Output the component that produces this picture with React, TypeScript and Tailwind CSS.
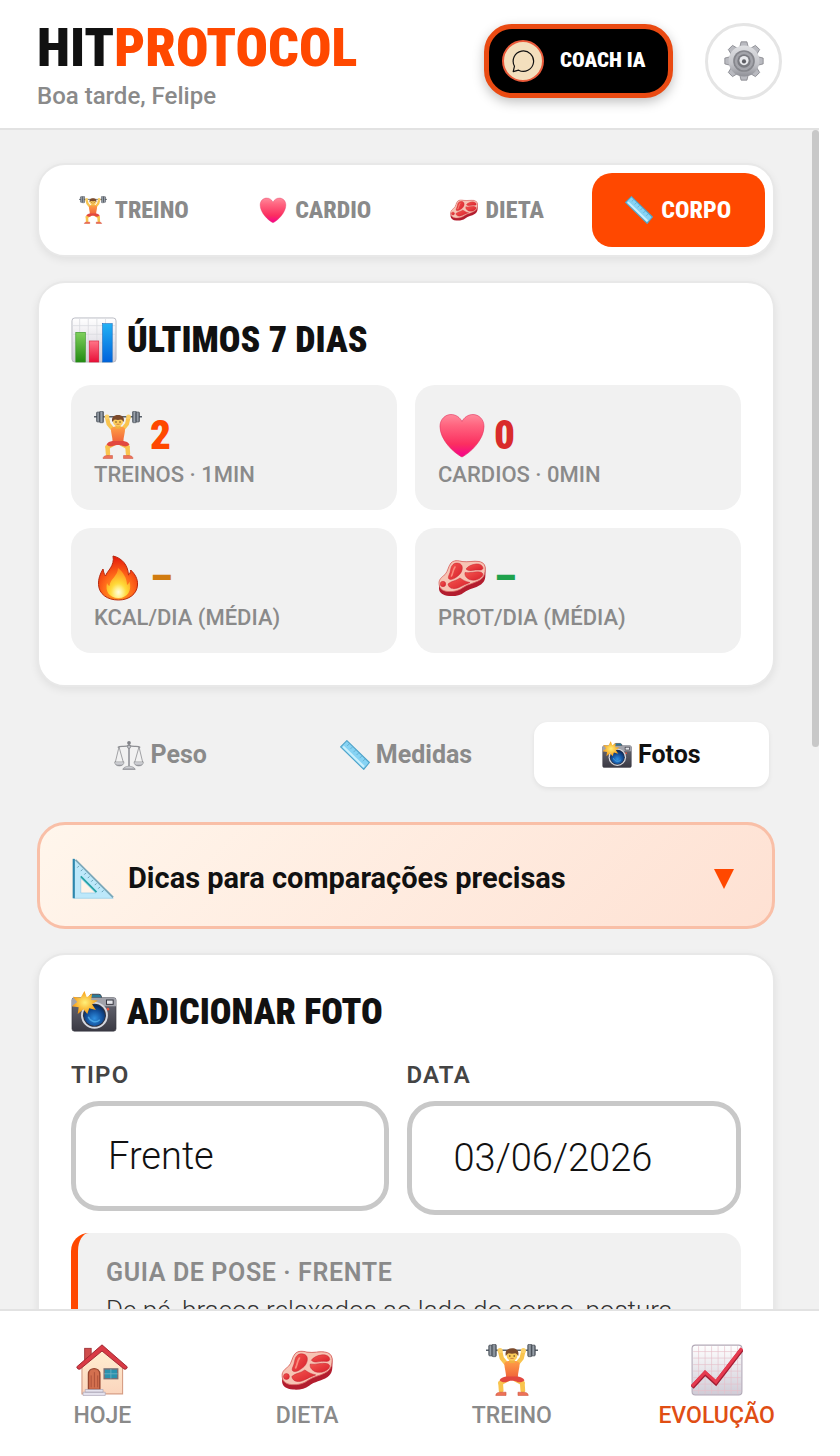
import type { ReactNode } from "react";
import clsx from "clsx";

type IconProps = { className?: string };

const heading = "font-[family-name:'Roboto_Condensed','Liberation_Sans_Narrow',Roboto,sans-serif]";

const Gradients = () => (
  <svg className="absolute h-0 w-0" aria-hidden="true">
    <defs>
      <linearGradient id="g-heart" x1="0" y1="0" x2="0" y2="1">
        <stop offset="0" stopColor="#ff8a9c" />
        <stop offset="0.25" stopColor="#ff6580" />
        <stop offset="0.7" stopColor="#fb2f60" />
        <stop offset="1" stopColor="#f5008f" />
      </linearGradient>
      <radialGradient id="g-fire" cx="0.5" cy="0.8" r="0.75">
        <stop offset="0" stopColor="#ffb020" />
        <stop offset="0.5" stopColor="#ff6a1a" />
        <stop offset="1" stopColor="#e8200c" />
      </radialGradient>
      <radialGradient id="g-flame" cx="0.5" cy="0.85" r="0.8">
        <stop offset="0" stopColor="#fffbc0" />
        <stop offset="0.45" stopColor="#ffd836" />
        <stop offset="1" stopColor="#ff8a1c" />
      </radialGradient>
      <radialGradient id="g-glow">
        <stop offset="0" stopColor="#fffde0" />
        <stop offset="1" stopColor="#fff07a" stopOpacity="0" />
      </radialGradient>
      <linearGradient id="g-meat" x1="0" y1="0" x2="1" y2="1">
        <stop offset="0" stopColor="#f4574f" />
        <stop offset="1" stopColor="#d8202c" />
      </linearGradient>
      <linearGradient id="g-paper" x1="0" y1="0" x2="0" y2="1">
        <stop offset="0" stopColor="#ffffff" />
        <stop offset="1" stopColor="#cfcbd6" />
      </linearGradient>
      <linearGradient id="g-green" x1="0" y1="0" x2="0" y2="1">
        <stop offset="0" stopColor="#7fd05c" />
        <stop offset="1" stopColor="#228a12" />
      </linearGradient>
      <linearGradient id="g-red" x1="0" y1="0" x2="0" y2="1">
        <stop offset="0" stopColor="#ff7486" />
        <stop offset="1" stopColor="#e80f38" />
      </linearGradient>
      <linearGradient id="g-blue" x1="0" y1="0" x2="0" y2="1">
        <stop offset="0" stopColor="#22b1f4" />
        <stop offset="1" stopColor="#0062dc" />
      </linearGradient>
      <linearGradient id="g-metal" x1="0" y1="0" x2="1" y2="0">
        <stop offset="0" stopColor="#5d656e" />
        <stop offset="0.5" stopColor="#9aa2ab" />
        <stop offset="1" stopColor="#4b525b" />
      </linearGradient>
      <linearGradient id="g-suit" x1="0" y1="0" x2="0" y2="1">
        <stop offset="0" stopColor="#ffa046" />
        <stop offset="1" stopColor="#f0623a" />
      </linearGradient>
      <linearGradient id="g-gear" x1="0" y1="0" x2="0" y2="1">
        <stop offset="0" stopColor="#dfe0e3" />
        <stop offset="0.6" stopColor="#c3c4c9" />
        <stop offset="1" stopColor="#8f9097" />
      </linearGradient>
      <linearGradient id="g-camera" x1="0" y1="0" x2="0" y2="1">
        <stop offset="0" stopColor="#8b8c96" />
        <stop offset="0.3" stopColor="#5c5d68" />
        <stop offset="1" stopColor="#3a3943" />
      </linearGradient>
      <radialGradient id="g-lens" cx="0.5" cy="0.65" r="0.6">
        <stop offset="0" stopColor="#2f8fe0" />
        <stop offset="0.6" stopColor="#14539f" />
        <stop offset="1" stopColor="#0b2b5c" />
      </radialGradient>
      <radialGradient id="g-flash">
        <stop offset="0" stopColor="#fff07a" />
        <stop offset="1" stopColor="#f79a12" />
      </radialGradient>
      <linearGradient id="g-wall" x1="0" y1="0" x2="0" y2="1">
        <stop offset="0" stopColor="#fff0d2" />
        <stop offset="1" stopColor="#fbd5bd" />
      </linearGradient>
    </defs>
  </svg>
);

const Lifter = ({ className }: IconProps) => (
  <svg viewBox="0 0 48 48" className={className} aria-hidden="true">
    <g fill="none" stroke="#f9c44e" strokeLinecap="round" strokeLinejoin="round">
      <path d="M13 6.500 14.500 13 19 18.500M34.500 6.500 33 13 28.500 18.500" strokeWidth="4" />
      <path d="M13.500 36 14 43M33.500 36 34 43" strokeWidth="4.400" />
    </g>
    <path d="M13.500 36 20 32.500M33.500 36 27 32.500" stroke="#f9c44e" strokeWidth="4.400" strokeLinecap="round" />
    <path d="M0 5.800h48" stroke="#59616b" strokeWidth="1.500" />
    <g fill="url(#g-metal)" stroke="#454b54" strokeWidth="0.600">
      <rect x="2.500" y="1" width="3.500" height="10" rx="1" />
      <rect x="5.500" y="0.300" width="4" height="11.400" rx="1" />
      <rect x="38.500" y="0.300" width="4" height="11.400" rx="1" />
      <rect x="42" y="1" width="3.500" height="10" rx="1" />
    </g>
    <circle cx="13" cy="6" r="2.400" fill="#fbd068" />
    <circle cx="34.500" cy="6" r="2.400" fill="#fbd068" />
    <path d="M17 17.500c2-2 4-2 7-2s5 0 7 2c.300 4-1.500 8-1.700 14h-10.600c-.200-6-2-10-1.700-14z" fill="url(#g-suit)" />
    <path d="M18.500 30h11c2.500 .300 5 1.500 6 3.500-2 2-4.500 2.300-6.500 1.500-2-.800-3.500-1-5-1s-3 .200-5 1c-2 .800-4.500 .500-6.500-1.500 1-2 3.500-3.200 6-3.500z" fill="#e2483f" />
    <path d="M9 47.500c0-2 2-3 4-3h5.500v3zM39 47.500c0-2-2-3-4-3h-5.500v3z" fill="#ee7257" stroke="#c9503e" strokeWidth="0.500" />
    <rect x="21.500" y="14" width="5" height="3.500" fill="#efb241" />
    <circle cx="24" cy="10.500" r="5" fill="#fbcb5a" />
    <path d="M18.300 11c-1.200-4.500 1.500-7 5.700-7s6.900 2.500 5.700 7c-1-1.300-1.500-2-2.500-2.500-2 .600-4.400 .600-6.400 0-1 .500-1.500 1.200-2.500 2.500z" fill="#7b4a2b" />
    <circle cx="22" cy="11" r="0.700" fill="#4b2d1a" />
    <circle cx="26" cy="11" r="0.700" fill="#4b2d1a" />
    <path d="M22.500 13.300h3" stroke="#c56a35" strokeWidth="0.700" />
  </svg>
);

const Heart = ({ className }: IconProps) => (
  <svg viewBox="0 0 48 48" className={className} aria-hidden="true">
    <path d="M24 46C16 42 2 29 2 15.500 2 8 7.500 3.500 13 3.500c5 0 9 3 11 7 2-4 6-7 11-7 5.500 0 11 4.500 11 12C46 29 32 42 24 46z" fill="url(#g-heart)" stroke="#e3305c" strokeWidth="0.600" />
  </svg>
);

const Meat = ({ className }: IconProps) => (
  <svg viewBox="0 0 48 48" className={className} aria-hidden="true">
    <path d="M1 30c0-4 3-6.500 6-9 3-3 3-8 6-12 3-3 7-2.500 11-1.500 6 1 12-1 17 0 5 1 7 4 6.500 10-.200 6 .300 9-4.500 13-6 4-12 4-17 8-4 3-9 4-15 3.500-6-.500-9.500-3-10-7z" fill="#b31d2e" />
    <path d="M1 29c0-4 3-6 6-8.500 3-3 3-8 6-11.500 3-3 7-2.500 11-1.500 6 1 12-1 17 0 5 1 7 4 6 10-.500 5-3 7.500-7 9.500-5 2.500-10 3-15 6.500-4 3-9 4.500-15 4-6-.500-9-3.500-9-8.500z" fill="#f7c4b4" stroke="#dc6a65" strokeWidth="0.800" />
    <g fill="url(#g-meat)" stroke="#c62533" strokeWidth="0.500">
      <path d="M15 10.500c3-2.500 8-1.500 9 1.500s-.500 7-3.500 9.500-7 5-9.500 3.500c-1.500-1.500 0-3.500 1-6.500.800-3 .800-6 3-8z" />
      <path d="M28 15c2-3 6-4.500 10-5 4-.300 7 1.500 7 4.500-1 2-3 1.500-6 1.500-4 0-8 2-11-1z" />
      <path d="M27 18.500c5 1 10-1.500 15-.500 3 .700 4 2.500 1.500 5-3 3-8 4-12 2.500-3-1.500-5-3.500-4.500-7z" />
      <path d="M10 30c3-3 8-3 12-6 3 2 5 3.500 10 4.500-4 1.500-7 3-11 5-4 1.800-10 2-11-3.500z" />
      <circle cx="5" cy="30" r="2.700" />
    </g>
    <path d="M17 13c-2 3-2 6-3.500 9" fill="none" stroke="#fb8a7c" strokeWidth="1.600" strokeLinecap="round" />
  </svg>
);

const Ruler = ({ className }: IconProps) => (
  <svg viewBox="0 0 48 48" className={className} aria-hidden="true">
    <path d="M1 11 11 1 47 36 38 47z" fill="#86d3f4" stroke="#4fa3c9" strokeWidth="1.800" strokeLinejoin="round" />
    <path d="M5 10.500 38.500 43" stroke="#c9effc" strokeWidth="3.500" />
    <path d="m15 6-3.500 3.500M20 11l-3.500 3.500M25 16l-3.500 3.500M30 20.500 26.500 24M35 25.500 31.500 29M40 30.500 36.500 34" stroke="#5a9fbd" strokeWidth="1" />
  </svg>
);

const BarChart = ({ className }: IconProps) => (
  <svg viewBox="0 0 48 48" className={className} aria-hidden="true">
    <rect x="1" y="1" width="46" height="46" rx="3" fill="url(#g-paper)" stroke="#b9bac2" strokeWidth="1" />
    <path d="M9 2v44M18 2v44M27 2v44M36 2v44M2 9h44M2 18h44M2 27h44M2 36h44" stroke="#d9dae0" strokeWidth="0.800" />
    <rect x="5" y="16" width="10" height="31" fill="url(#g-green)" stroke="#2f8f1f" strokeWidth="0.600" />
    <rect x="19" y="25" width="10" height="22" fill="url(#g-red)" stroke="#d01c38" strokeWidth="0.600" />
    <rect x="33" y="7" width="10" height="40" fill="url(#g-blue)" stroke="#0d66bd" strokeWidth="0.600" />
  </svg>
);

const TrendChart = ({ className }: IconProps) => (
  <svg viewBox="0 0 48 48" className={className} aria-hidden="true">
    <rect x="1" y="1" width="46" height="46" rx="3" fill="url(#g-paper)" stroke="#b3a9b7" strokeWidth="1" />
    <path d="M7 2v44M13 2v44M19 2v44M25 2v44M31 2v44M37 2v44M43 2v44M2 7h44M2 13h44M2 19h44M2 25h44M2 31h44M2 37h44M2 43h44" stroke="#e6bfcb" strokeWidth="0.600" />
    <path d="M1 40 13 27l10 9L47 5" fill="none" stroke="#a11c33" strokeWidth="4" />
    <path d="M1 39 13 26l10 9L47 4" fill="none" stroke="#e63a4f" strokeWidth="3" />
  </svg>
);

const Fire = ({ className }: IconProps) => (
  <svg viewBox="0 0 48 48" className={className} aria-hidden="true">
    <path d="M19 2c9 2 15 9 15.500 19 1.500-1 2-3 2.200-5C41 20 44 25 43.500 31 43 40 35 46 24.500 46 13 46 5 40 4.500 30.500 4.200 25 6 20 9 15c.600 3 1 5 2.500 7C13 17 21 12 19 2z" fill="url(#g-fire)" stroke="#b8280e" strokeWidth="1" />
    <path d="M24 14c5 4 9 10 9 17 1.300-.700 2-2 2.500-3.500C38 36 34 44 24.500 44S11 37 13 29c.700 1.500 1.200 2.500 2.500 3C16 25 24 22 24 14z" fill="url(#g-flame)" />
    <ellipse cx="24.500" cy="38" rx="7" ry="8" fill="url(#g-glow)" />
  </svg>
);

const Scales = ({ className }: IconProps) => (
  <svg viewBox="0 0 48 48" className={className} aria-hidden="true">
    <g fill="none" stroke="#8f9094" strokeWidth="1.300">
      <path d="M8 11 2 36M8 11l7 25M40 11l-7 25M40 11l6 25" />
      <path d="M6 12c5-4 12 1 18-4 6 5 13 0 18 4" strokeWidth="2" />
    </g>
    <rect x="22.500" y="4" width="3" height="38" fill="#9fa0a5" />
    <circle cx="24" cy="4.500" r="3" fill="#818287" />
    <circle cx="24" cy="11" r="2.500" fill="#c2c3c8" stroke="#77787d" />
    <path d="M1 35h15c0 4-3 6.500-7.500 6.500S1 39 1 35zM32 35h15c0 4-3 6.500-7.500 6.500S32 39 32 35z" fill="url(#g-gear)" stroke="#77787d" strokeWidth="0.800" />
    <path d="M14 47c1-3 5-5 10-5s9 2 10 5z" fill="url(#g-gear)" stroke="#77787d" strokeWidth="0.800" />
  </svg>
);

const Camera = ({ className }: IconProps) => (
  <svg viewBox="0 0 48 48" className={className} aria-hidden="true">
    <path d="M19 10c0-3 1-4.500 3-4.500h7c2 0 3 1.500 3 4.500z" fill="#2b7b98" stroke="#41424c" />
    <rect x="1" y="9" width="46" height="35" rx="2.500" fill="url(#g-camera)" stroke="#35343d" strokeWidth="0.600" />
    <path d="M1 18v-6.500C1 10 2 9 3.500 9h41c1.500 0 2.500 1 2.500 2.500V18z" fill="#a1a2aa" />
    <rect x="37" y="11.500" width="7" height="4.500" fill="#e4e5ea" stroke="#31323c" />
    <circle cx="38.500" cy="21" r="1.400" fill="#e9503b" />
    <circle cx="24.500" cy="27.500" r="14" fill="#d5d7de" />
    <circle cx="24.500" cy="27.500" r="12" fill="#303340" />
    <circle cx="24.500" cy="27.500" r="11" fill="url(#g-lens)" />
    <path d="M18 29c2 5 8 7 12 3" fill="none" stroke="#59b8f2" strokeWidth="1.500" opacity="0.700" />
    <path d="m14 2 2.500 6.500L22 5l-1 6.500 7 .500-6 4 4 6-7-2-2 6-4-5-6 5 1-7-7-1 5.500-4.500L2 8l8 1z" fill="url(#g-flash)" />
  </svg>
);

const SetSquare = ({ className }: IconProps) => (
  <svg viewBox="0 0 48 48" className={className} aria-hidden="true">
    <path fillRule="evenodd" d="M2 1v45h45zM10 23l17 17H10z" fill="#bde8fa" stroke="#8fcbe8" strokeWidth="0.800" />
    <path d="M2 1v45" stroke="#2c86ad" strokeWidth="2.500" />
    <path d="M4 2 47 45" stroke="#7aa7b8" strokeWidth="2" />
    <path d="m10 21 18 18" stroke="#27a3a6" strokeWidth="2" />
    <path d="m8 9-2 2m6 2-2 2m6 2-2 2m6 2-2 2m6 2-2 2m6 2-2 2m6 2-2 2m6 2-2 2" stroke="#4f8ea6" strokeWidth="0.900" />
  </svg>
);

const House = ({ className }: IconProps) => (
  <svg viewBox="0 0 48 48" className={className} aria-hidden="true">
    <rect x="8" y="4" width="6" height="14" fill="#cf4d4c" stroke="#9d2f35" strokeWidth="0.800" />
    <path d="M5.500 20 24 3l19 17v26h-37.500z" fill="url(#g-wall)" stroke="#d69c83" strokeWidth="1" />
    <path d="M.800 21 24 .800 47.200 21c.500 1.500-1.500 3-3 2L24 6.500 4 23c-1.500 1-3.500-.500-3.200-2z" fill="#d93a45" stroke="#9f2932" strokeWidth="0.900" />
    <path d="M11.500 42V28c0-7 10.500-7 10.500 0v14z" fill="#d3704f" stroke="#96452f" strokeWidth="1.300" />
    <path d="M14 40V29M17 40V26M20 40V29" stroke="#a94f38" strokeWidth="0.800" />
    <rect x="26" y="23" width="12.500" height="9" fill="#2a92ae" stroke="#7b6f73" strokeWidth="1.300" />
    <path d="M32.200 23v9M26 27.500h12.500" stroke="#6fb0c2" strokeWidth="0.800" />
    <path d="M8.500 42h16.500v2.500H8.500zM6.500 44.500h20.500V47.500H6.500z" fill="#e5e3ee" stroke="#a9a3b4" strokeWidth="0.600" />
  </svg>
);

const Gear = ({ className }: IconProps) => (
  <svg viewBox="0 0 48 48" className={className} aria-hidden="true">
    <g fill="#b9bac0" stroke="#85868c" strokeWidth="1">
      {[0, 45, 90, 135].map((deg) => (
        <path key={deg} d="M20.500 1h7l2 8v30l-2 8h-7l-2-8V9z" transform={`rotate(${deg} 24 24)`} />
      ))}
    </g>
    <circle cx="24" cy="24" r="18.500" fill="url(#g-gear)" />
    <circle cx="24" cy="24" r="13" fill="#85868c" />
    <circle cx="24" cy="24" r="11" fill="#a3a4aa" />
    <circle cx="24" cy="24" r="8" fill="#7a7b81" />
    <circle cx="24" cy="23.500" r="5.500" fill="#e9eaed" />
    <circle cx="24" cy="24.500" r="2.500" fill="#5d5e64" />
  </svg>
);

const ChatBubble = ({ className }: IconProps) => (
  <svg viewBox="0 0 24 24" className={className} fill="none" stroke="#111" strokeWidth="1.200" strokeLinejoin="round" aria-hidden="true">
    <path d="M3.500 17.200A10.200 10.200 0 1 1 7.600 21.200L2.200 22.600z" />
  </svg>
);

const tabs = [
  { label: "TREINO", Icon: Lifter },
  { label: "CARDIO", Icon: Heart },
  { label: "DIETA", Icon: Meat },
  { label: "CORPO", Icon: Ruler, active: true },
];

const stats = [
  { value: "2", label: "TREINOS · 1MIN", Icon: Lifter, color: "text-[#ff4800]" },
  { value: "0", label: "CARDIOS · 0MIN", Icon: Heart, color: "text-[#d92b2b]" },
  { value: "–", label: "KCAL/DIA (MÉDIA)", Icon: Fire, color: "text-[#d17c10]" },
  { value: "–", label: "PROT/DIA (MÉDIA)", Icon: Meat, color: "text-[#1fa24c]" },
];

const views = [
  { label: "Peso", Icon: Scales },
  { label: "Medidas", Icon: Ruler },
  { label: "Fotos", Icon: Camera, active: true },
];

const navItems = [
  { label: "HOJE", Icon: House },
  { label: "DIETA", Icon: Meat },
  { label: "TREINO", Icon: Lifter },
  { label: "EVOLUÇÃO", Icon: TrendChart, active: true },
];

const Card = ({ children }: { children: ReactNode }) => (
  <section className="rounded-[28px] border-2 border-[#e8e8e8] bg-white p-8 shadow-[0_3px_8px_rgba(0,0,0,0.07)]">{children}</section>
);

const CardTitle = ({ icon, children }: { icon: ReactNode; children: ReactNode }) => (
  <h2 className={clsx(heading, "flex h-[50px] items-center gap-2.5 text-[36px] leading-none font-black text-[#111]")}>
    {icon}
    {children}
  </h2>
);

const Header = () => (
  <header className="flex h-[130px] shrink-0 items-center justify-between border-b-2 border-[#e2e2e2] bg-white px-[37px]">
    <div className="pt-2">
      <h1 className={clsx(heading, "text-[54px] leading-[48px] font-black text-[#111]")}>
        HIT<span className="text-[#ff4800]">PROTOCOL</span>
      </h1>
      <p className="mt-2 text-2xl leading-8 font-medium text-[#8a8a8a]">Boa tarde, Felipe</p>
    </div>
    <div className="flex items-center gap-8 pb-1.5">
      <button className={clsx(heading, "flex h-[74px] w-[189px] items-center gap-4 rounded-[28px] border-[5px] border-[#ea4a12] bg-black pl-[13px] text-[21px] font-black whitespace-nowrap text-white shadow-[0_4px_12px_rgba(0,0,0,0.25)]")}>
        <span className="flex h-[42px] w-[42px] shrink-0 items-center justify-center rounded-full border-2 border-[#ea5a3a] bg-[#f3dfbd]">
          <ChatBubble className="h-6 w-6" />
        </span>
        COACH IA
      </button>
      <button aria-label="Configurações" className="flex h-[77px] w-[77px] items-center justify-center rounded-full border-[3px] border-[#e5e5e5] bg-white">
        <Gear className="h-10 w-10" />
      </button>
    </div>
  </header>
);

const PhotoForm = () => (
  <Card>
    <CardTitle icon={<Camera className="h-[46px] w-[46px]" />}>ADICIONAR FOTO</CardTitle>
    <div className="mt-[22px] grid grid-cols-[318fr_335fr] items-start gap-[18px]">
      <div>
        <label htmlFor="tipo" className="block text-2xl leading-8 font-semibold tracking-wider text-[#444]">TIPO</label>
        <select id="tipo" className="mt-2.5 block h-[110px] w-full appearance-none rounded-[28px] border-[5px] border-[#c8c8c8] bg-white px-8 text-[38px] font-light text-[#111]">
          <option>Frente</option>
          <option>Costas</option>
          <option>Lado</option>
        </select>
      </div>
      <div>
        <label htmlFor="data" className="block text-2xl leading-8 font-semibold tracking-wider text-[#444]">DATA</label>
        <input id="data" type="text" inputMode="numeric" defaultValue="03/06/2026" className="mt-2.5 block h-[114px] w-full rounded-[28px] border-[5px] border-[#c8c8c8] bg-white px-[42px] text-[38px] font-light text-[#111]" />
      </div>
    </div>
    <div className="mt-[18px] rounded-[18px] border-l-[7px] border-[#ff4800] bg-[#f1f1f1] px-7 py-6">
      <h3 className="text-[25px] leading-8 font-semibold tracking-wide text-[#8a8a8a]">GUIA DE POSE · FRENTE</h3>
      <p className="text-[26px] leading-[42px] font-light text-[#333]">
        De pé, braços relaxados ao lado do corpo, postura ereta.
      </p>
    </div>
  </Card>
);

const App = () => {
  return (
    <div className="h-screen bg-white pr-[21px] font-[family-name:Roboto,sans-serif]">
      <Gradients />
      <div className="flex h-full flex-col overflow-hidden bg-[#f1f1f1]">
        <Header />

        <div className="flex min-h-0 flex-1">
          <main className="flex min-w-0 flex-1 flex-col gap-6 overflow-y-auto px-[37px] pt-[33px] pb-8 [scrollbar-width:none]">
            <div className="flex shrink-0 gap-2 rounded-[28px] border-2 border-[#e8e8e8] bg-white p-2 shadow-[0_3px_8px_rgba(0,0,0,0.07)]">
              {tabs.map(({ label, Icon, active }) => (
                <button
                  key={label}
                  className={clsx(
                    heading,
                    "flex h-[74px] flex-1 items-center justify-center gap-2 rounded-[20px] text-2xl font-extrabold",
                    active ? "bg-[#ff4800] text-white" : "text-[#8a8a8a]"
                  )}
                >
                  <Icon className="h-7 w-7" />
                  {label}
                </button>
              ))}
            </div>

            <Card>
              <CardTitle icon={<BarChart className="h-[46px] w-[46px]" />}>ÚLTIMOS 7 DIAS</CardTitle>
              <div className="mt-5 grid grid-cols-2 gap-[18px]">
                {stats.map(({ value, label, Icon, color }) => (
                  <div key={label} className="h-[125px] rounded-[20px] bg-[#f1f1f1] px-[23px] pt-[26px]">
                    <div className={clsx(heading, color, "flex h-12 items-center gap-2 text-[41px] leading-none font-black")}>
                      <Icon className="h-12 w-12" />
                      {value}
                    </div>
                    <p className="text-[22px] leading-8 font-medium text-[#8a8a8a]">{label}</p>
                  </div>
                ))}
              </div>
            </Card>

            <div className="my-1.5 flex shrink-0 gap-2.5 px-1.5 py-[5px]">
              {views.map(({ label, Icon, active }) => (
                <button
                  key={label}
                  className={clsx(
                    "flex h-[65px] flex-1 items-center justify-center gap-1.5 rounded-[14px] text-[25px] font-bold",
                    active ? "bg-white text-[#111] shadow-[0_2px_5px_rgba(0,0,0,0.07)]" : "text-[#8a8a8a]"
                  )}
                >
                  <Icon className="h-[30px] w-[30px]" />
                  {label}
                </button>
              ))}
            </div>

            <button className="flex h-[107px] shrink-0 items-center rounded-[28px] border-[3px] border-[#f9bfa7] bg-linear-135 from-[#fff6ec] to-[#fee1d3] px-8 pt-1.5 text-left">
              <SetSquare className="h-[42px] w-[42px]" />
              <span className="ml-3.5 flex-1 text-[29px] font-bold text-[#111]">Dicas para comparações precisas</span>
              <svg viewBox="0 0 20 20" className="mr-1.5 h-5 w-5" aria-hidden="true">
                <path d="M0 0h20L10 20z" fill="#ff4800" />
              </svg>
            </button>

            <PhotoForm />
          </main>
          <div className="w-[7px] shrink-0">
            <div className="h-[617px] rounded-full bg-[#c8c8c8]" />
          </div>
        </div>

        <nav className="grid h-[147px] shrink-0 grid-cols-4 border-t-2 border-[#e2e2e2] bg-white pt-[33px]">
          {navItems.map(({ label, Icon, active }) => (
            <a
              key={label}
              href="#"
              className={clsx("flex flex-col items-center text-[23px] leading-8 font-medium", active ? "text-[#e04e14]" : "text-[#8a8a8a]")}
            >
              <Icon className="mb-1 h-[52px] w-[52px]" />
              {label}
            </a>
          ))}
        </nav>
      </div>
    </div>
  );
};

export default App;
